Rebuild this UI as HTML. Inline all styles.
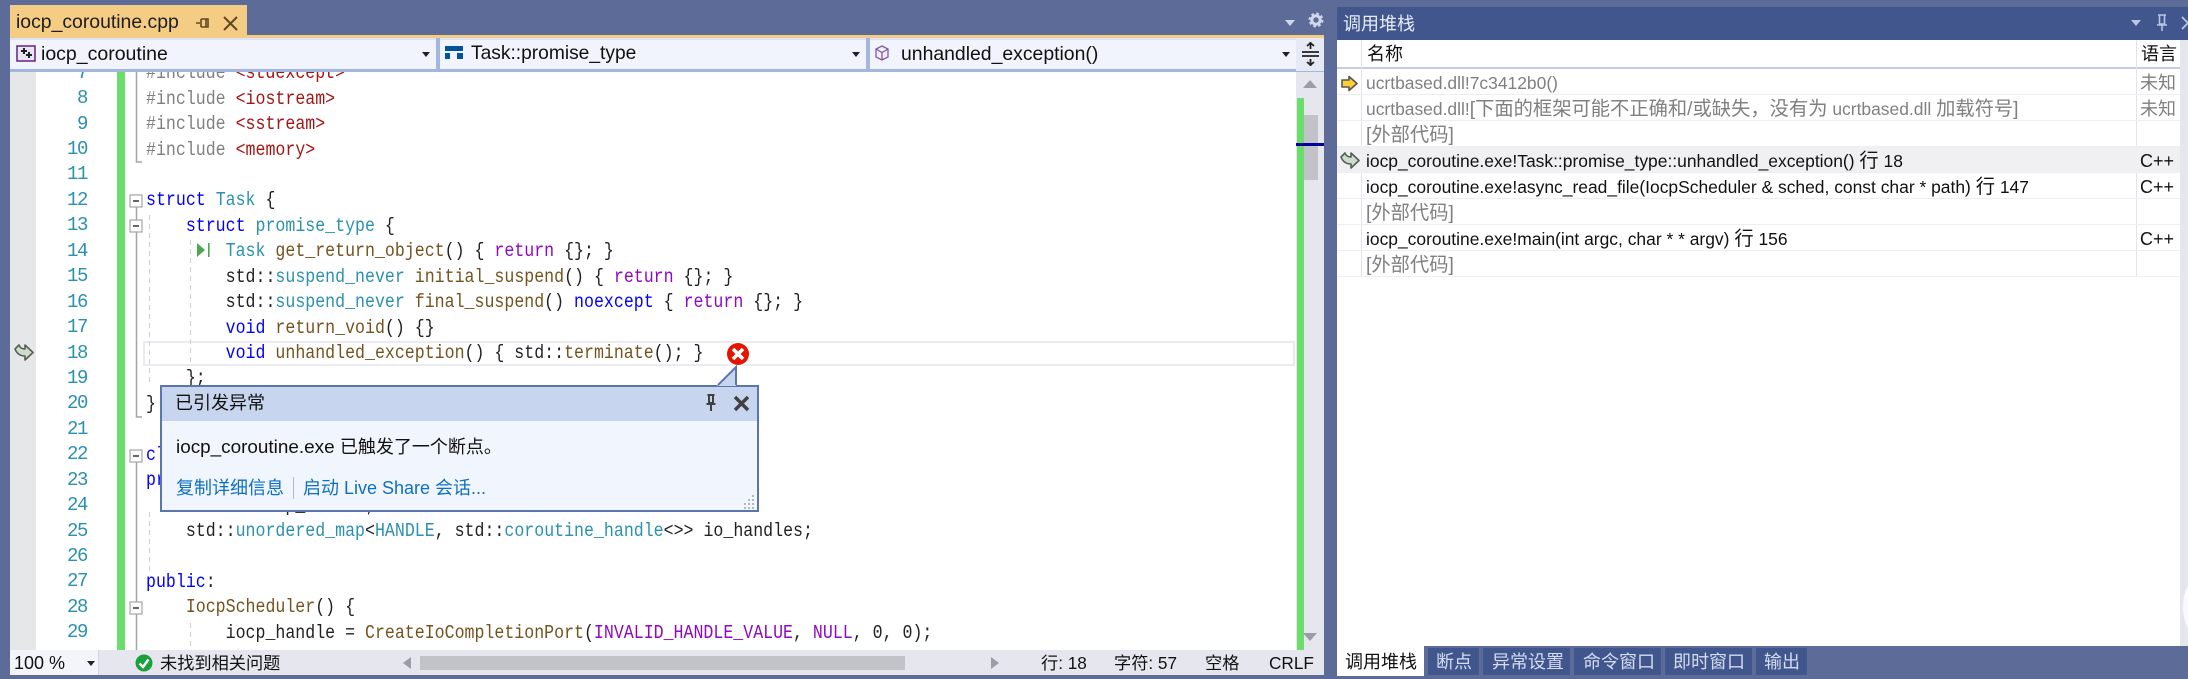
<!DOCTYPE html>
<html style="overflow:hidden;width:2188px;height:679px"><head><meta charset="utf-8"><style>
html,body{margin:0;padding:0}
body{width:2188px;height:679px;position:relative;overflow:hidden;background:#5D6B99;font-family:"Liberation Sans","Noto Sans CJK SC",sans-serif;color:#111}
.b{position:absolute}
.t{position:absolute;white-space:pre;font-size:18px;line-height:26px;height:26px}
.r{font-size:17.45px}
.r i{font-style:normal;font-size:19.3px}
.clip{position:absolute;overflow:hidden}
.code{position:absolute;left:0;top:-10.8px;width:1300px;font-family:"Liberation Mono","Noto Sans CJK SC",monospace;font-size:19px;line-height:25.45px;transform:scaleX(.873);transform-origin:0 0;color:#222}
.code div{height:25.45px;white-space:pre}
.nums{position:absolute;left:0;top:-11.3px;width:87px;text-align:right;font-family:"Liberation Mono",monospace;font-size:19px;line-height:25.45px;color:#2B91AF;letter-spacing:-1.4px}
.nums div{height:25.45px}
.k{color:#0000FF}.ty{color:#2B91AF}.f{color:#74531F}.p{color:#808080}.s{color:#A31515}.m{color:#8F08C4}
.tri{position:absolute;width:0;height:0;border-left:4.5px solid transparent;border-right:4.5px solid transparent;border-top:5px solid #222}
.row{position:absolute;left:1337px;width:843px;height:26px;border-bottom:1px solid #EEEEF2;box-sizing:border-box}
.tab{position:absolute;top:648px;height:27px;background:#40568D}
.tt{color:#D5DCF0}
.gr{color:#808080}
</style></head><body>

<!-- doc tab -->
<div class="b" style="left:10px;top:5px;width:237px;height:30px;background:#F5CC84"></div>
<div class="b" style="left:10px;top:35px;width:1314px;height:3px;background:#F5CC84"></div>
<div class="t" style="left:16px;top:9px;font-size:19.4px;color:#1E1E1E">iocp_coroutine.cpp</div>
<svg class="b" style="left:195px;top:16px" width="16" height="14"><path d="M1 7H5M6 3V11M6 3H13V11H6M11 3V11" fill="none" stroke="#5E4A22" stroke-width="1.6"/></svg>
<svg class="b" style="left:223px;top:16px" width="15" height="15"><path d="M1 1L14 14M14 1L1 14" stroke="#5E4A22" stroke-width="2"/></svg>
<div class="tri" style="left:1285px;top:20px;border-top-color:#D0D7E8;border-left-width:5px;border-right-width:5px;border-top-width:6px"></div>
<svg class="b" style="left:1308px;top:12px" width="16" height="16"><circle cx="8" cy="8" r="4.2" fill="none" stroke="#D0D7E8" stroke-width="3"/><circle cx="8" cy="8" r="6.2" fill="none" stroke="#D0D7E8" stroke-width="2.5" stroke-dasharray="2.6 2.27"/></svg>

<!-- toolbar -->
<div class="b" style="left:10px;top:38px;width:1286px;height:34px;background:#F1F4FC"></div>
<div class="b" style="left:10px;top:38px;width:1286px;height:2px;background:#DCE4F4"></div>
<div class="b" style="left:10px;top:69px;width:1286px;height:3px;background:#A3B6DD"></div>
<div class="b" style="left:436px;top:38px;width:4px;height:34px;background:#A3B6DD"></div>
<div class="b" style="left:866px;top:38px;width:4px;height:34px;background:#A3B6DD"></div>
<div class="b" style="left:1296px;top:38px;width:28px;height:33px;background:#E6EAF6;border-bottom:1px solid #A3B6DD"></div>
<svg class="b" style="left:16px;top:45px" width="20" height="17"><rect x="1" y="1" width="18" height="15" fill="#E6E6F4" stroke="#68217A" stroke-width="1.5"/><path d="M8 3V9M5 6H11M13 7V13M10 10H16" stroke="#222" stroke-width="2"/></svg>
<div class="t" style="left:41px;top:41px;font-size:19.5px">iocp_coroutine</div>
<div class="tri" style="left:422px;top:52px"></div>
<svg class="b" style="left:445px;top:46px" width="19" height="14"><path d="M0 0H18V5H0ZM0 7H5V13H0ZM12 7H18V13H12Z" fill="#00539C"/></svg>
<div class="t" style="left:471px;top:41px;font-size:19.2px">Task::promise_type</div>
<div class="tri" style="left:852px;top:52px"></div>
<svg class="b" style="left:875px;top:45px" width="14" height="16"><path d="M7 1L13 4V12L7 15L1 12V4ZM1 4L7 7.5L13 4M7 7.5V15" fill="#F3EEF8" stroke="#7C5AA6" stroke-width="1.3"/></svg>
<div class="t" style="left:901px;top:41px;font-size:19.4px">unhandled_exception()</div>
<div class="tri" style="left:1282px;top:52px"></div>
<svg class="b" style="left:1302px;top:42px" width="18" height="25"><path d="M0 10H17M0 14H17M8.5 0V7M8.5 17V24M5 4L8.5 1L12 4M5 20L8.5 23L12 20" fill="none" stroke="#222" stroke-width="1.8"/></svg>

<!-- editor -->
<div class="b" style="left:10px;top:72px;width:1314px;height:578px;background:#fff"></div>
<div class="b" style="left:10px;top:72px;width:26px;height:578px;background:#E6E7E8"></div>
<div class="b" style="left:117px;top:72px;width:8px;height:578px;background:#6BDD6B"></div>

<!-- current line highlight -->
<div class="b" style="left:143px;top:341px;width:1152px;height:25px;border:2px solid #EAEAF0;box-sizing:border-box"></div>

<!-- indent guides -->
<svg class="b" style="left:125px;top:72px" width="80" height="578">
<path d="M24.5 143V311M24.5 440V500M65.5 168V293M65.5 551V578" stroke="#CFCFCF" stroke-width="1" stroke-dasharray="5 4" fill="none"/>
<path d="M11.5 0V90H17M11.5 135V148M11.5 160V345H17M11.5 390V530M11.5 542V578" stroke="#A5A5A5" stroke-width="1.5" fill="none"/>
<g fill="#fff" stroke="#A5A5A5" stroke-width="1.2"><rect x="5" y="123" width="12" height="12"/><rect x="5" y="148" width="12" height="12"/><rect x="5" y="378" width="12" height="12"/><rect x="5" y="530" width="12" height="12"/></g>
<path d="M8 129H14M8 154H14M8 384H14M8 536H14" stroke="#333" stroke-width="1.5"/>
</svg>

<div class="clip" style="left:0;top:72px;width:120px;height:578px"><div class="nums">
<div>7</div><div>8</div><div>9</div><div>10</div><div>11</div><div>12</div><div>13</div><div>14</div><div>15</div><div>16</div><div>17</div><div>18</div><div>19</div><div>20</div><div>21</div><div>22</div><div>23</div><div>24</div><div>25</div><div>26</div><div>27</div><div>28</div><div>29</div>
</div></div>

<div class="clip" style="left:146px;top:72px;width:1150px;height:578px"><div class="code">
<div><span class="p">#include </span><span class="s">&lt;stdexcept&gt;</span></div>
<div><span class="p">#include </span><span class="s">&lt;iostream&gt;</span></div>
<div><span class="p">#include </span><span class="s">&lt;sstream&gt;</span></div>
<div><span class="p">#include </span><span class="s">&lt;memory&gt;</span></div>
<div> </div>
<div><span class="k">struct</span> <span class="ty">Task</span> {</div>
<div>    <span class="k">struct</span> <span class="ty">promise_type</span> {</div>
<div>        <span class="ty">Task</span> <span class="f">get_return_object</span>() { <span class="m">return</span> {}; }</div>
<div>        std::<span class="ty">suspend_never</span> <span class="f">initial_suspend</span>() { <span class="m">return</span> {}; }</div>
<div>        std::<span class="ty">suspend_never</span> <span class="f">final_suspend</span>() <span class="k">noexcept</span> { <span class="m">return</span> {}; }</div>
<div>        <span class="k">void</span> <span class="f">return_void</span>() {}</div>
<div>        <span class="k">void</span> <span class="f">unhandled_exception</span>() { std::<span class="f">terminate</span>(); }</div>
<div>    };</div>
<div>}</div>
<div> </div>
<div><span class="k">class</span> <span class="ty">IocpScheduler</span> {</div>
<div><span class="k">private</span>:</div>
<div>    <span class="ty">HANDLE</span> iocp_handle;</div>
<div>    std::<span class="ty">unordered_map</span>&lt;<span class="ty">HANDLE</span>, std::<span class="ty">coroutine_handle</span>&lt;&gt;&gt; io_handles;</div>
<div> </div>
<div><span class="k">public</span>:</div>
<div>    <span class="f">IocpScheduler</span>() {</div>
<div>        iocp_handle = <span class="f">CreateIoCompletionPort</span>(<span class="m">INVALID_HANDLE_VALUE</span>, <span class="m">NULL</span>, 0, 0);</div>
</div></div>

<!-- line 14 glyph -->
<svg class="b" style="left:196px;top:242px" width="15" height="16"><path d="M1 1L9 8L1 15Z" fill="#4EA64E"/><rect x="12" y="1" width="1.6" height="14" fill="#4EA64E"/></svg>

<!-- breakpoint arrow -->
<svg class="b" style="left:13px;top:343px" width="21" height="19"><path d="M2 6L6 2C7 5 9 6 12 6V2L20 9.5L12 17V13C8 13 4 11 2 6Z" fill="#C7E0C7" stroke="#5A5A5A" stroke-width="1.6" stroke-linejoin="round"/></svg>

<!-- scrollbar -->
<div class="b" style="left:1296px;top:72px;width:28px;height:578px;background:#E6E7EE"></div>
<div class="b" style="left:1297px;top:98px;width:7px;height:552px;background:#6BDD6B"></div>
<div class="b" style="left:1304px;top:115px;width:14px;height:65px;background:#C2C3C9"></div>
<div class="b" style="left:1296px;top:143px;width:28px;height:3px;background:#00009E"></div>
<div class="b" style="left:1303px;top:80px;width:0;height:0;border-left:7px solid transparent;border-right:7px solid transparent;border-bottom:8px solid #9A9DA8"></div>
<div class="b" style="left:1303px;top:633px;width:0;height:0;border-left:7px solid transparent;border-right:7px solid transparent;border-top:8px solid #9A9DA8"></div>

<!-- error icon -->
<svg class="b" style="left:725px;top:341px" width="26" height="26"><circle cx="13" cy="13" r="12.5" fill="#fff"/><circle cx="13" cy="13" r="11" fill="#E51400"/><path d="M8 8L18 18M18 8L8 18" stroke="#fff" stroke-width="3.6"/></svg>

<!-- popup -->
<div class="b" style="left:160px;top:385px;width:599px;height:127px;background:#F1F5FD;border:2px solid #5A76AB;box-sizing:border-box"></div>
<div class="b" style="left:162px;top:387px;width:595px;height:34px;background:#C8D5EF"></div>
<svg class="b" style="left:716px;top:365px" width="24" height="23"><path d="M1 21L20 2V21Z" fill="#C8D5EF"/><path d="M2 20L20 2V20" fill="none" stroke="#5A76AB" stroke-width="2"/></svg>
<div class="t" style="left:175px;top:390px">已引发异常</div>
<svg class="b" style="left:704px;top:394px" width="14" height="18"><path d="M3.5 1H10.5M5 1V9H9V1M2.5 10H11.5M7 10V17" fill="none" stroke="#404040" stroke-width="2"/></svg>
<svg class="b" style="left:733px;top:395px" width="17" height="17"><path d="M2 2L15 15M15 2L2 15" stroke="#404040" stroke-width="3.4"/></svg>
<div class="t" style="left:176px;top:434px"><span style="font-size:18.9px">iocp_coroutine.exe </span>已触发了一个断点。</div>
<div class="t" style="left:176px;top:475px;color:#0E70C0">复制详细信息</div>
<div class="b" style="left:293px;top:477px;width:1px;height:22px;background:#B4B9C6"></div>
<div class="t" style="left:303px;top:475px;color:#0E70C0">启动 Live Share 会话...</div>
<svg class="b" style="left:742px;top:494px" width="14" height="15" fill="#B0B8C8"><rect x="10" y="1" width="2" height="2"/><rect x="10" y="5" width="2" height="2"/><rect x="10" y="9" width="2" height="2"/><rect x="10" y="13" width="2" height="2"/><rect x="6" y="5" width="2" height="2"/><rect x="6" y="9" width="2" height="2"/><rect x="6" y="13" width="2" height="2"/><rect x="2" y="9" width="2" height="2"/><rect x="2" y="13" width="2" height="2"/></svg>

<!-- status bar -->
<div class="b" style="left:10px;top:650px;width:1314px;height:25px;background:#E6E7EE"></div>
<div class="b" style="left:10px;top:650px;width:88px;height:25px;background:#F3F5FB;border-right:1px solid #D3D6E2"></div>
<div class="t" style="left:14px;top:650px;height:25px">100 %</div>
<div class="tri" style="left:87px;top:661px"></div>
<svg class="b" style="left:135px;top:654px" width="18" height="18"><circle cx="9" cy="9" r="8.5" fill="#1BA13A"/><path d="M4.5 9.5L8 13L13.5 5.5" fill="none" stroke="#fff" stroke-width="2.4"/></svg>
<div class="t" style="left:160px;top:650px;height:25px;font-size:17.2px">未找到相关问题</div>
<div class="b" style="left:403px;top:657px;width:0;height:0;border-top:6.5px solid transparent;border-bottom:6.5px solid transparent;border-right:8px solid #9A9DA8"></div>
<div class="b" style="left:420px;top:656px;width:485px;height:14px;background:#C2C3C9"></div>
<div class="b" style="left:991px;top:657px;width:0;height:0;border-top:6.5px solid transparent;border-bottom:6.5px solid transparent;border-left:8px solid #9A9DA8"></div>
<div class="t" style="left:1041px;top:650px;height:25px;font-size:17.2px">行: 18</div>
<div class="t" style="left:1114px;top:650px;height:25px;font-size:17.2px">字符: 57</div>
<div class="t" style="left:1205px;top:650px;height:25px;font-size:17.2px">空格</div>
<div class="t" style="left:1269px;top:650px;height:25px;font-size:17.2px">CRLF</div>

<!-- call stack panel -->
<div class="b" style="left:1337px;top:7px;width:851px;height:33px;background:#40568D"></div>
<div class="t" style="left:1343px;top:11px;color:#E6EBF7">调用堆栈</div>
<div class="tri" style="left:2131px;top:20px;border-top-color:#B9C5E3;border-left-width:5px;border-right-width:5px;border-top-width:6px"></div>
<svg class="b" style="left:2155px;top:14px" width="14" height="18"><path d="M3 1H11M4.5 1V10H9.5V1M2 11H12M7 11V17" fill="none" stroke="#B9C5E3" stroke-width="1.6"/></svg>
<svg class="b" style="left:2181px;top:16px" width="7" height="14"><path d="M1 1L12 12M1 13L12 2" fill="none" stroke="#B9C5E3" stroke-width="1.8"/></svg>
<div class="b" style="left:1337px;top:40px;width:843px;height:606px;background:#fff"></div>
<div class="clip" style="left:2180px;top:40px;width:8px;height:606px;background:#E6E7EE"><div class="b" style="left:3px;top:543px;width:20px;height:48px;background:#FAFAFD;border-radius:50%"></div></div>
<div class="b" style="left:1337px;top:67px;width:843px;height:2px;background:#C3CEE5"></div>
<div class="b" style="left:1361px;top:40px;width:1px;height:237px;background:#DFE4F0"></div>
<div class="b" style="left:2136px;top:40px;width:1px;height:237px;background:#DFE4F0"></div>
<div class="t" style="left:1367px;top:41px">名称</div>
<div class="t" style="left:2141px;top:41px">语言</div>

<div class="row" style="top:69px"></div><div class="row" style="top:95px"></div><div class="row" style="top:121px"></div>
<div class="row" style="top:147px;background:#F0F0F3"></div>
<div class="row" style="top:173px"></div><div class="row" style="top:199px"></div><div class="row" style="top:225px"></div><div class="row" style="top:251px"></div>

<svg class="b" style="left:1340px;top:75px" width="19" height="17"><path d="M2 5H9V1.5L17 8.5L9 15.5V12H2Z" fill="#FFCF34" stroke="#555" stroke-width="1.6" stroke-linejoin="round"/></svg>
<svg class="b" style="left:1339px;top:151px" width="21" height="19"><path d="M2 6L6 2C7 5 9 6 12 6V2L20 9.5L12 17V13C8 13 4 11 2 6Z" fill="#C7E0C7" stroke="#5A5A5A" stroke-width="1.6" stroke-linejoin="round"/></svg>

<div class="t gr r" style="left:1366px;top:70px">ucrtbased.dll!7c3412b0()</div>
<div class="t gr" style="left:2140px;top:70px">未知</div>
<div class="t gr r" style="left:1366px;top:96px">ucrtbased.dll!<i>[下面的框架可能不正确和/或缺失，没有为</i> ucrtbased.dll <i>加载符号]</i></div>
<div class="t gr" style="left:2140px;top:96px">未知</div>
<div class="t gr r" style="left:1366px;top:122px"><i>[外部代码]</i></div>
<div class="t r" style="left:1366px;top:148px">iocp_coroutine.exe!Task::promise_type::unhandled_exception() <i>行</i> 18</div>
<div class="t" style="left:2140px;top:148px">C++</div>
<div class="t r" style="left:1366px;top:174px">iocp_coroutine.exe!async_read_file(IocpScheduler &amp; sched, const char * path) <i>行</i> 147</div>
<div class="t" style="left:2140px;top:174px">C++</div>
<div class="t gr r" style="left:1366px;top:200px"><i>[外部代码]</i></div>
<div class="t r" style="left:1366px;top:226px">iocp_coroutine.exe!main(int argc, char * * argv) <i>行</i> 156</div>
<div class="t" style="left:2140px;top:226px">C++</div>
<div class="t gr r" style="left:1366px;top:252px"><i>[外部代码]</i></div>

<!-- tool tabs -->
<div class="b" style="left:1337px;top:646px;width:87px;height:30px;background:#fff"></div>
<div class="t" style="left:1345px;top:649px">调用堆栈</div>
<div class="tab" style="left:1428px;width:51px"></div><div class="t tt" style="left:1436px;top:649px">断点</div>
<div class="tab" style="left:1483px;width:87px"></div><div class="t tt" style="left:1492px;top:649px">异常设置</div>
<div class="tab" style="left:1574px;width:87px"></div><div class="t tt" style="left:1583px;top:649px">命令窗口</div>
<div class="tab" style="left:1665px;width:87px"></div><div class="t tt" style="left:1673px;top:649px">即时窗口</div>
<div class="tab" style="left:1756px;width:51px"></div><div class="t tt" style="left:1764px;top:649px">输出</div>
</body></html>
